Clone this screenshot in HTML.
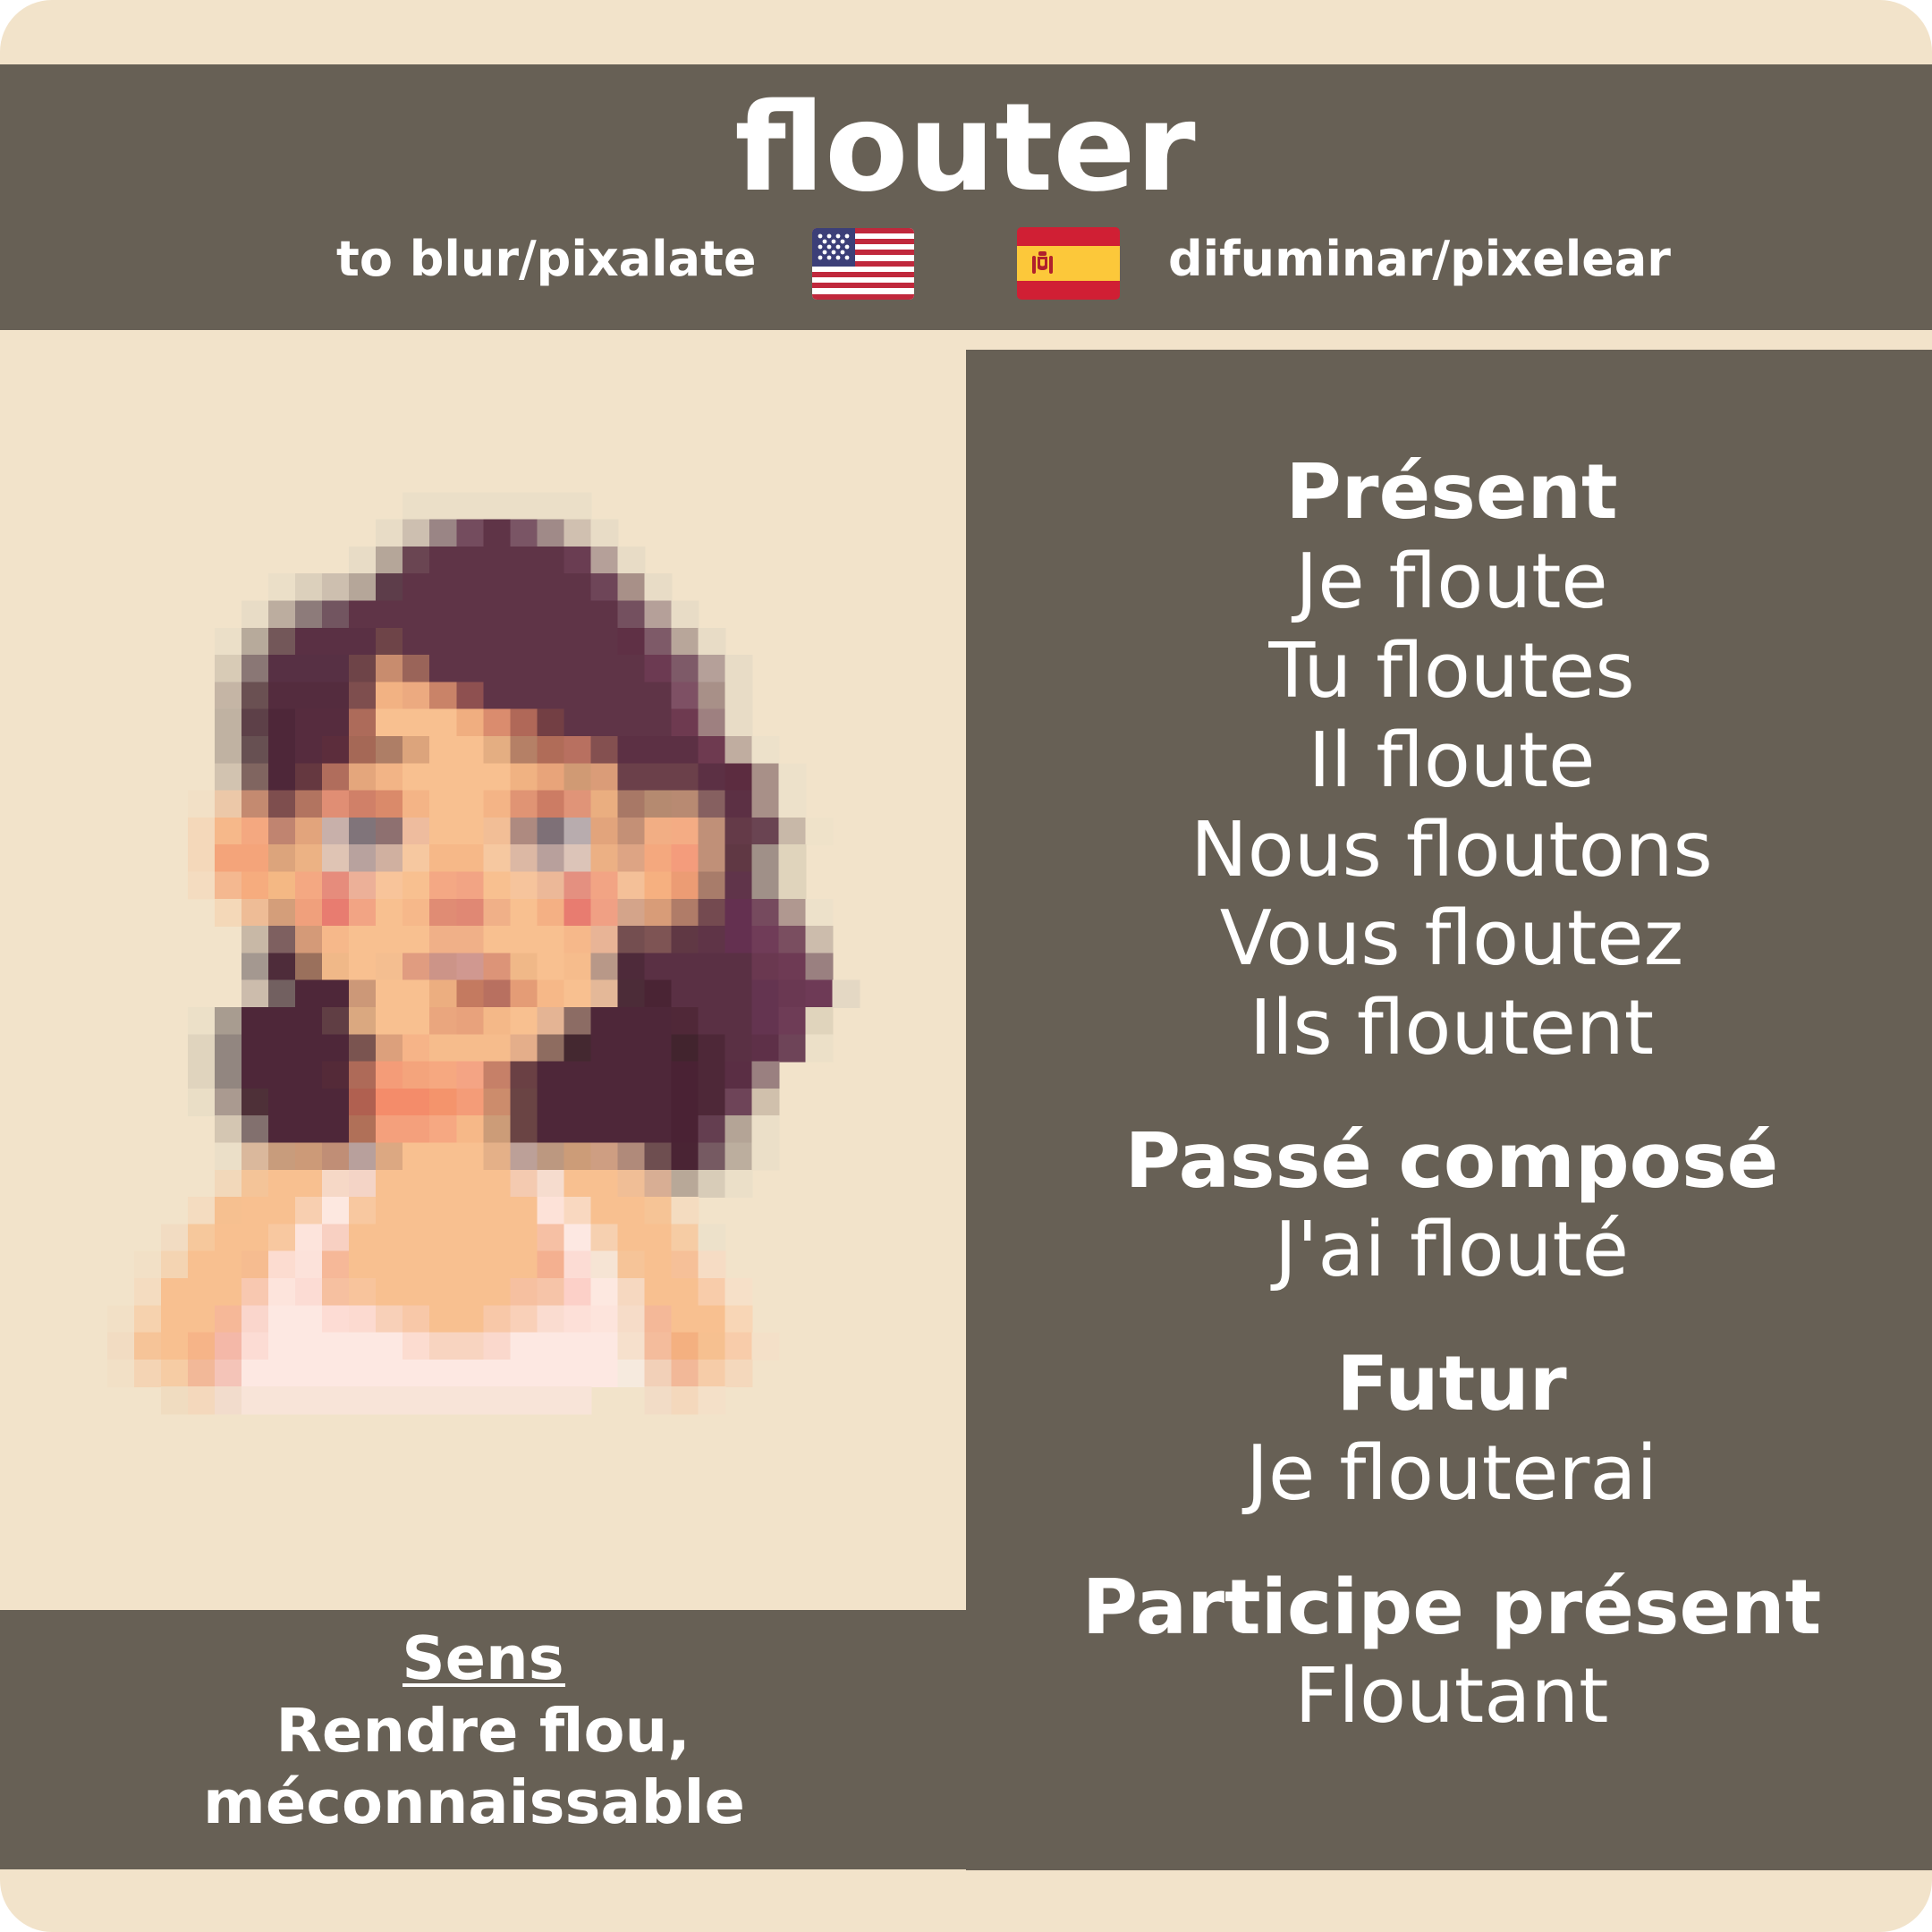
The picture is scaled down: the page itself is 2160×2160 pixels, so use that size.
<!DOCTYPE html>
<html><head><meta charset="utf-8"><style>
html,body{margin:0;padding:0;background:#fff;}
svg{display:block}
text{font-family:"DejaVu Sans","Liberation Sans",sans-serif;fill:#fff}
.b{font-weight:bold}
</style></head><body>
<svg width="2160" height="2160" viewBox="0 0 2160 2160" xmlns="http://www.w3.org/2000/svg">
<rect x="0" y="0" width="2160" height="2160" rx="58" fill="#f2e3ca"/>
<rect x="0" y="72" width="2160" height="297" fill="#676055"/>
<rect x="1080" y="391" width="1080" height="1700" fill="#676055"/>
<rect x="0" y="1800" width="2160" height="290" fill="#676055"/>

<text class="b" x="1079" y="212" font-size="136" text-anchor="middle">flouter</text>
<text class="b" x="376" y="308" font-size="54">to blur/pixalate</text>
<text class="b" x="1306" y="308" font-size="54">difuminar/pixelear</text>

<!-- US flag -->
<g transform="translate(908,255)">
<clipPath id="uc"><rect width="114" height="80" rx="5"/></clipPath>
<g clip-path="url(#uc)">
<rect width="114" height="80" fill="#fff"/>
<g fill="#c0283c">
<rect y="0" width="114" height="6"/><rect y="12" width="114" height="6"/><rect y="24" width="114" height="6"/><rect y="37" width="114" height="6"/><rect y="49" width="114" height="6"/><rect y="61" width="114" height="6"/><rect y="74" width="114" height="6"/>
</g>
<rect width="48" height="43" fill="#3c3f78"/>
<g fill="#fff">
<circle cx="9" cy="9" r="2.4"/><circle cx="19" cy="9" r="2.4"/><circle cx="29" cy="9" r="2.4"/><circle cx="39" cy="9" r="2.4"/>
<circle cx="14" cy="15" r="2.4"/><circle cx="24" cy="15" r="2.4"/><circle cx="34" cy="15" r="2.4"/>
<circle cx="9" cy="21" r="2.4"/><circle cx="19" cy="21" r="2.4"/><circle cx="29" cy="21" r="2.4"/><circle cx="39" cy="21" r="2.4"/>
<circle cx="14" cy="27" r="2.4"/><circle cx="24" cy="27" r="2.4"/><circle cx="34" cy="27" r="2.4"/>
<circle cx="9" cy="33" r="2.4"/><circle cx="19" cy="33" r="2.4"/><circle cx="29" cy="33" r="2.4"/><circle cx="39" cy="33" r="2.4"/>
</g></g></g>
<!-- Spain flag -->
<g transform="translate(1137,254)">
<clipPath id="sc"><rect width="115" height="81" rx="5"/></clipPath>
<g clip-path="url(#sc)">
<rect width="115" height="81" fill="#d01f34"/>
<rect y="21" width="115" height="39" fill="#fcc83a"/>
<g fill="#b0202c">
<rect x="17" y="32" width="4" height="20" rx="2"/><rect x="36" y="32" width="4" height="20" rx="2"/>
<rect x="24" y="27" width="9" height="5" rx="2"/>
<path d="M23 33h11v12c0 4-11 4-11 0z"/>
</g>
<path d="M26 36h5v6c0 2-5 2-5 0z" fill="#fcc83a"/>
</g></g>

<!-- Face -->
<g transform="translate(120,520) scale(30.02,30.3)" shape-rendering="crispEdges">
<rect x="11" y="1" width="7.03" height="1.03" fill="#ebdfc8"/>
<rect x="10" y="2" width="1.03" height="1.03" fill="#e8dcc6"/><rect x="11" y="2" width="1.03" height="1.03" fill="#cdbfb0"/><rect x="12" y="2" width="1.03" height="1.03" fill="#9a8585"/><rect x="13" y="2" width="1.03" height="1.03" fill="#744c5e"/><rect x="14" y="2" width="1.03" height="1.03" fill="#5f3447"/><rect x="15" y="2" width="1.03" height="1.03" fill="#7a5565"/><rect x="16" y="2" width="1.03" height="1.03" fill="#a08a88"/><rect x="17" y="2" width="1.03" height="1.03" fill="#d0c0b0"/><rect x="18" y="2" width="1.03" height="1.03" fill="#e8dcc6"/>
<rect x="9" y="3" width="1.03" height="1.03" fill="#e8dcc6"/><rect x="10" y="3" width="1.03" height="1.03" fill="#b5a699"/><rect x="11" y="3" width="1.03" height="1.03" fill="#6a4552"/><rect x="12" y="3" width="5.03" height="1.03" fill="#5f3447"/><rect x="17" y="3" width="1.03" height="1.03" fill="#6a3d52"/><rect x="18" y="3" width="1.03" height="1.03" fill="#b5a099"/><rect x="19" y="3" width="1.03" height="1.03" fill="#e8dcc6"/>
<rect x="6" y="4" width="1.03" height="1.03" fill="#ebdfc8"/><rect x="7" y="4" width="1.03" height="1.03" fill="#dcd0bc"/><rect x="8" y="4" width="1.03" height="1.03" fill="#cdbfaf"/><rect x="9" y="4" width="1.03" height="1.03" fill="#b5a699"/><rect x="10" y="4" width="1.03" height="1.03" fill="#5d3d4a"/><rect x="11" y="4" width="7.03" height="1.03" fill="#5f3447"/><rect x="18" y="4" width="1.03" height="1.03" fill="#6e4558"/><rect x="19" y="4" width="1.03" height="1.03" fill="#a89088"/><rect x="20" y="4" width="1.03" height="1.03" fill="#e8dcc6"/>
<rect x="5" y="5" width="1.03" height="1.03" fill="#e8dcc6"/><rect x="6" y="5" width="1.03" height="1.03" fill="#bcad9f"/><rect x="7" y="5" width="1.03" height="1.03" fill="#8d7b7a"/><rect x="8" y="5" width="1.03" height="1.03" fill="#725560"/><rect x="9" y="5" width="10.03" height="1.03" fill="#5f3447"/><rect x="19" y="5" width="1.03" height="1.03" fill="#74505f"/><rect x="20" y="5" width="1.03" height="1.03" fill="#b5a099"/><rect x="21" y="5" width="1.03" height="1.03" fill="#e8dcc6"/>
<rect x="4" y="6" width="1.03" height="1.03" fill="#ebdfc8"/><rect x="5" y="6" width="1.03" height="1.03" fill="#b7aa9b"/><rect x="6" y="6" width="1.03" height="1.03" fill="#735759"/><rect x="7" y="6" width="3.03" height="1.03" fill="#5a3044"/><rect x="10" y="6" width="1.03" height="1.03" fill="#6e4448"/><rect x="11" y="6" width="8.03" height="1.03" fill="#5f3447"/><rect x="19" y="6" width="1.03" height="1.03" fill="#5f3045"/><rect x="20" y="6" width="1.03" height="1.03" fill="#7e5a68"/><rect x="21" y="6" width="1.03" height="1.03" fill="#b8a69a"/><rect x="22" y="6" width="1.03" height="1.03" fill="#e8dcc6"/>
<rect x="4" y="7" width="1.03" height="1.03" fill="#d8cbb6"/><rect x="5" y="7" width="1.03" height="1.03" fill="#8a7775"/><rect x="6" y="7" width="3.03" height="1.03" fill="#573044"/><rect x="9" y="7" width="1.03" height="1.03" fill="#6e4448"/><rect x="10" y="7" width="1.03" height="1.03" fill="#c88c6e"/><rect x="11" y="7" width="1.03" height="1.03" fill="#9a6459"/><rect x="12" y="7" width="8.03" height="1.03" fill="#5f3447"/><rect x="20" y="7" width="1.03" height="1.03" fill="#6c3a52"/><rect x="21" y="7" width="1.03" height="1.03" fill="#7e5a68"/><rect x="22" y="7" width="1.03" height="1.03" fill="#b5a099"/><rect x="23" y="7" width="1.03" height="1.03" fill="#e8dcc6"/>
<rect x="4" y="8" width="1.03" height="1.03" fill="#c5b5a5"/><rect x="5" y="8" width="1.03" height="1.03" fill="#6a5052"/><rect x="6" y="8" width="3.03" height="1.03" fill="#542c3e"/><rect x="9" y="8" width="1.03" height="1.03" fill="#7e4e4e"/><rect x="10" y="8" width="1.03" height="1.03" fill="#f2b283"/><rect x="11" y="8" width="1.03" height="1.03" fill="#ecaa80"/><rect x="12" y="8" width="1.03" height="1.03" fill="#c98368"/><rect x="13" y="8" width="1.03" height="1.03" fill="#8e5050"/><rect x="14" y="8" width="7.03" height="1.03" fill="#5f3447"/><rect x="21" y="8" width="1.03" height="1.03" fill="#7e5064"/><rect x="22" y="8" width="1.03" height="1.03" fill="#a89088"/><rect x="23" y="8" width="1.03" height="1.03" fill="#e8dcc6"/>
<rect x="4" y="9" width="1.03" height="1.03" fill="#c0b2a2"/><rect x="5" y="9" width="1.03" height="1.03" fill="#5d4048"/><rect x="6" y="9" width="1.03" height="1.03" fill="#4e2739"/><rect x="7" y="9" width="2.03" height="1.03" fill="#562c3e"/><rect x="9" y="9" width="1.03" height="1.03" fill="#ad6b5a"/><rect x="10" y="9" width="3.03" height="1.03" fill="#f8c090"/><rect x="13" y="9" width="1.03" height="1.03" fill="#f0ae80"/><rect x="14" y="9" width="1.03" height="1.03" fill="#da8c6e"/><rect x="15" y="9" width="1.03" height="1.03" fill="#b06858"/><rect x="16" y="9" width="1.03" height="1.03" fill="#733f44"/><rect x="17" y="9" width="4.03" height="1.03" fill="#5f3447"/><rect x="21" y="9" width="1.03" height="1.03" fill="#6e3a50"/><rect x="22" y="9" width="1.03" height="1.03" fill="#9e8080"/><rect x="23" y="9" width="1.03" height="1.03" fill="#e8dcc6"/>
<rect x="4" y="10" width="1.03" height="1.03" fill="#c0b2a2"/><rect x="5" y="10" width="1.03" height="1.03" fill="#675052"/><rect x="6" y="10" width="1.03" height="1.03" fill="#4e2739"/><rect x="7" y="10" width="1.03" height="1.03" fill="#562c3e"/><rect x="8" y="10" width="1.03" height="1.03" fill="#5c2d3c"/><rect x="9" y="10" width="1.03" height="1.03" fill="#a56856"/><rect x="10" y="10" width="1.03" height="1.03" fill="#ae7e66"/><rect x="11" y="10" width="1.03" height="1.03" fill="#dca47c"/><rect x="12" y="10" width="2.03" height="1.03" fill="#f8c090"/><rect x="14" y="10" width="1.03" height="1.03" fill="#e4ae82"/><rect x="15" y="10" width="1.03" height="1.03" fill="#b58066"/><rect x="16" y="10" width="1.03" height="1.03" fill="#b06c58"/><rect x="17" y="10" width="1.03" height="1.03" fill="#b87060"/><rect x="18" y="10" width="1.03" height="1.03" fill="#845050"/><rect x="19" y="10" width="3.03" height="1.03" fill="#5c3044"/><rect x="22" y="10" width="1.03" height="1.03" fill="#6e3a50"/><rect x="23" y="10" width="1.03" height="1.03" fill="#c0ada0"/><rect x="24" y="10" width="1.03" height="1.03" fill="#ede1ca"/>
<rect x="4" y="11" width="1.03" height="1.03" fill="#d2c3b0"/><rect x="5" y="11" width="1.03" height="1.03" fill="#806560"/><rect x="6" y="11" width="1.03" height="1.03" fill="#4e2739"/><rect x="7" y="11" width="1.03" height="1.03" fill="#653840"/><rect x="8" y="11" width="1.03" height="1.03" fill="#b06d5c"/><rect x="9" y="11" width="1.03" height="1.03" fill="#e4a67c"/><rect x="10" y="11" width="1.03" height="1.03" fill="#f2b486"/><rect x="11" y="11" width="4.03" height="1.03" fill="#f8c090"/><rect x="15" y="11" width="1.03" height="1.03" fill="#f0b282"/><rect x="16" y="11" width="1.03" height="1.03" fill="#e8a47a"/><rect x="17" y="11" width="1.03" height="1.03" fill="#d09a74"/><rect x="18" y="11" width="1.03" height="1.03" fill="#da9c78"/><rect x="19" y="11" width="3.03" height="1.03" fill="#6b404a"/><rect x="22" y="11" width="1.03" height="1.03" fill="#5c3044"/><rect x="23" y="11" width="1.03" height="1.03" fill="#5c2c40"/><rect x="24" y="11" width="1.03" height="1.03" fill="#a89088"/><rect x="25" y="11" width="1.03" height="1.03" fill="#ede1ca"/>
<rect x="3" y="12" width="1.03" height="1.03" fill="#f2e0c6"/><rect x="4" y="12" width="1.03" height="1.03" fill="#ecc8a8"/><rect x="5" y="12" width="1.03" height="1.03" fill="#c48a70"/><rect x="6" y="12" width="1.03" height="1.03" fill="#7e4e4e"/><rect x="7" y="12" width="1.03" height="1.03" fill="#b27460"/><rect x="8" y="12" width="1.03" height="1.03" fill="#e08e74"/><rect x="9" y="12" width="1.03" height="1.03" fill="#d08068"/><rect x="10" y="12" width="1.03" height="1.03" fill="#da8a6a"/><rect x="11" y="12" width="1.03" height="1.03" fill="#f4b486"/><rect x="12" y="12" width="2.03" height="1.03" fill="#f8c090"/><rect x="14" y="12" width="1.03" height="1.03" fill="#f4b486"/><rect x="15" y="12" width="1.03" height="1.03" fill="#e09474"/><rect x="16" y="12" width="1.03" height="1.03" fill="#cc7c64"/><rect x="17" y="12" width="1.03" height="1.03" fill="#e09478"/><rect x="18" y="12" width="1.03" height="1.03" fill="#eaae80"/><rect x="19" y="12" width="1.03" height="1.03" fill="#a87866"/><rect x="20" y="12" width="1.03" height="1.03" fill="#b58a70"/><rect x="21" y="12" width="1.03" height="1.03" fill="#b88a72"/><rect x="22" y="12" width="1.03" height="1.03" fill="#866060"/><rect x="23" y="12" width="1.03" height="1.03" fill="#5c3044"/><rect x="24" y="12" width="1.03" height="1.03" fill="#a89088"/><rect x="25" y="12" width="1.03" height="1.03" fill="#ede1ca"/>
<rect x="3" y="13" width="1.03" height="1.03" fill="#f4d8ba"/><rect x="4" y="13" width="1.03" height="1.03" fill="#f6b88a"/><rect x="5" y="13" width="1.03" height="1.03" fill="#f4a880"/><rect x="6" y="13" width="1.03" height="1.03" fill="#c08470"/><rect x="7" y="13" width="1.03" height="1.03" fill="#e2a47c"/><rect x="8" y="13" width="1.03" height="1.03" fill="#c8b0aa"/><rect x="9" y="13" width="1.03" height="1.03" fill="#80747a"/><rect x="10" y="13" width="1.03" height="1.03" fill="#8e7070"/><rect x="11" y="13" width="1.03" height="1.03" fill="#eebc9e"/><rect x="12" y="13" width="2.03" height="1.03" fill="#f8c090"/><rect x="14" y="13" width="1.03" height="1.03" fill="#f2be96"/><rect x="15" y="13" width="1.03" height="1.03" fill="#ae8a80"/><rect x="16" y="13" width="1.03" height="1.03" fill="#7e7077"/><rect x="17" y="13" width="1.03" height="1.03" fill="#b8acae"/><rect x="18" y="13" width="1.03" height="1.03" fill="#e2a47c"/><rect x="19" y="13" width="1.03" height="1.03" fill="#c49076"/><rect x="20" y="13" width="1.03" height="1.03" fill="#f2ae84"/><rect x="21" y="13" width="1.03" height="1.03" fill="#f4ac84"/><rect x="22" y="13" width="1.03" height="1.03" fill="#c09078"/><rect x="23" y="13" width="1.03" height="1.03" fill="#643a48"/><rect x="24" y="13" width="1.03" height="1.03" fill="#6a4452"/><rect x="25" y="13" width="1.03" height="1.03" fill="#c8b8a8"/><rect x="26" y="13" width="1.03" height="1.03" fill="#efe2c9"/>
<rect x="3" y="14" width="1.03" height="1.03" fill="#f4d8ba"/><rect x="4" y="14" width="2.03" height="1.03" fill="#f4a47a"/><rect x="6" y="14" width="1.03" height="1.03" fill="#dca47c"/><rect x="7" y="14" width="1.03" height="1.03" fill="#ecb284"/><rect x="8" y="14" width="1.03" height="1.03" fill="#dfc4b4"/><rect x="9" y="14" width="1.03" height="1.03" fill="#b8a29e"/><rect x="10" y="14" width="1.03" height="1.03" fill="#d0b0a0"/><rect x="11" y="14" width="1.03" height="1.03" fill="#f6c8a0"/><rect x="12" y="14" width="2.03" height="1.03" fill="#f6b888"/><rect x="14" y="14" width="1.03" height="1.03" fill="#f6c8a0"/><rect x="15" y="14" width="1.03" height="1.03" fill="#dcb8a4"/><rect x="16" y="14" width="1.03" height="1.03" fill="#b8a09c"/><rect x="17" y="14" width="1.03" height="1.03" fill="#dcc4b8"/><rect x="18" y="14" width="1.03" height="1.03" fill="#ecb084"/><rect x="19" y="14" width="1.03" height="1.03" fill="#dda484"/><rect x="20" y="14" width="1.03" height="1.03" fill="#f4a87e"/><rect x="21" y="14" width="1.03" height="1.03" fill="#f49c7c"/><rect x="22" y="14" width="1.03" height="1.03" fill="#c09078"/><rect x="23" y="14" width="1.03" height="1.03" fill="#603844"/><rect x="24" y="14" width="1.03" height="1.03" fill="#a09088"/><rect x="25" y="14" width="1.03" height="1.03" fill="#e0d4bc"/>
<rect x="3" y="15" width="1.03" height="1.03" fill="#f4dcc0"/><rect x="4" y="15" width="1.03" height="1.03" fill="#f4b890"/><rect x="5" y="15" width="1.03" height="1.03" fill="#f6ac7e"/><rect x="6" y="15" width="1.03" height="1.03" fill="#f4b884"/><rect x="7" y="15" width="1.03" height="1.03" fill="#f4a882"/><rect x="8" y="15" width="1.03" height="1.03" fill="#e68c7c"/><rect x="9" y="15" width="1.03" height="1.03" fill="#ecb098"/><rect x="10" y="15" width="1.03" height="1.03" fill="#f8c49a"/><rect x="11" y="15" width="1.03" height="1.03" fill="#f8c090"/><rect x="12" y="15" width="1.03" height="1.03" fill="#f4a884"/><rect x="13" y="15" width="1.03" height="1.03" fill="#f2a484"/><rect x="14" y="15" width="1.03" height="1.03" fill="#f8c090"/><rect x="15" y="15" width="1.03" height="1.03" fill="#f6c49c"/><rect x="16" y="15" width="1.03" height="1.03" fill="#ecb898"/><rect x="17" y="15" width="1.03" height="1.03" fill="#e49080"/><rect x="18" y="15" width="1.03" height="1.03" fill="#f2a484"/><rect x="19" y="15" width="1.03" height="1.03" fill="#f4c098"/><rect x="20" y="15" width="1.03" height="1.03" fill="#f6b080"/><rect x="21" y="15" width="1.03" height="1.03" fill="#ec9c74"/><rect x="22" y="15" width="1.03" height="1.03" fill="#a87c6a"/><rect x="23" y="15" width="1.03" height="1.03" fill="#60344a"/><rect x="24" y="15" width="1.03" height="1.03" fill="#a09088"/><rect x="25" y="15" width="1.03" height="1.03" fill="#e0d4bc"/>
<rect x="4" y="16" width="1.03" height="1.03" fill="#f4d8b8"/><rect x="5" y="16" width="1.03" height="1.03" fill="#eebc96"/><rect x="6" y="16" width="1.03" height="1.03" fill="#d49e7a"/><rect x="7" y="16" width="1.03" height="1.03" fill="#f0a07c"/><rect x="8" y="16" width="1.03" height="1.03" fill="#e87c70"/><rect x="9" y="16" width="1.03" height="1.03" fill="#f2a484"/><rect x="10" y="16" width="1.03" height="1.03" fill="#f8c090"/><rect x="11" y="16" width="1.03" height="1.03" fill="#f6b88a"/><rect x="12" y="16" width="1.03" height="1.03" fill="#e08c74"/><rect x="13" y="16" width="1.03" height="1.03" fill="#e08874"/><rect x="14" y="16" width="1.03" height="1.03" fill="#f0b088"/><rect x="15" y="16" width="1.03" height="1.03" fill="#f8c090"/><rect x="16" y="16" width="1.03" height="1.03" fill="#f4b084"/><rect x="17" y="16" width="1.03" height="1.03" fill="#e87c70"/><rect x="18" y="16" width="1.03" height="1.03" fill="#f0a084"/><rect x="19" y="16" width="1.03" height="1.03" fill="#d4a48a"/><rect x="20" y="16" width="1.03" height="1.03" fill="#d89c78"/><rect x="21" y="16" width="1.03" height="1.03" fill="#b07c68"/><rect x="22" y="16" width="1.03" height="1.03" fill="#744a50"/><rect x="23" y="16" width="1.03" height="1.03" fill="#643050"/><rect x="24" y="16" width="1.03" height="1.03" fill="#764a5e"/><rect x="25" y="16" width="1.03" height="1.03" fill="#b09890"/><rect x="26" y="16" width="1.03" height="1.03" fill="#ede1ca"/>
<rect x="5" y="17" width="1.03" height="1.03" fill="#c8b8a6"/><rect x="6" y="17" width="1.03" height="1.03" fill="#7e6060"/><rect x="7" y="17" width="1.03" height="1.03" fill="#d49a78"/><rect x="8" y="17" width="1.03" height="1.03" fill="#f6b88a"/><rect x="9" y="17" width="3.03" height="1.03" fill="#f8c090"/><rect x="12" y="17" width="2.03" height="1.03" fill="#f0b088"/><rect x="14" y="17" width="3.03" height="1.03" fill="#f8c090"/><rect x="17" y="17" width="1.03" height="1.03" fill="#f6b88a"/><rect x="18" y="17" width="1.03" height="1.03" fill="#e8b496"/><rect x="19" y="17" width="1.03" height="1.03" fill="#744e50"/><rect x="20" y="17" width="1.03" height="1.03" fill="#7e5454"/><rect x="21" y="17" width="1.03" height="1.03" fill="#603844"/><rect x="22" y="17" width="1.03" height="1.03" fill="#5f3447"/><rect x="23" y="17" width="1.03" height="1.03" fill="#643050"/><rect x="24" y="17" width="1.03" height="1.03" fill="#703c58"/><rect x="25" y="17" width="1.03" height="1.03" fill="#7a4e60"/><rect x="26" y="17" width="1.03" height="1.03" fill="#ccbcac"/>
<rect x="5" y="18" width="1.03" height="1.03" fill="#a49890"/><rect x="6" y="18" width="1.03" height="1.03" fill="#4e2c3a"/><rect x="7" y="18" width="1.03" height="1.03" fill="#9a705c"/><rect x="8" y="18" width="1.03" height="1.03" fill="#f0b888"/><rect x="9" y="18" width="1.03" height="1.03" fill="#f8c090"/><rect x="10" y="18" width="1.03" height="1.03" fill="#f4be90"/><rect x="11" y="18" width="1.03" height="1.03" fill="#e09c80"/><rect x="12" y="18" width="1.03" height="1.03" fill="#cc9488"/><rect x="13" y="18" width="1.03" height="1.03" fill="#d09890"/><rect x="14" y="18" width="1.03" height="1.03" fill="#dc9478"/><rect x="15" y="18" width="1.03" height="1.03" fill="#f0b888"/><rect x="16" y="18" width="1.03" height="1.03" fill="#f8c090"/><rect x="17" y="18" width="1.03" height="1.03" fill="#f6bc8c"/><rect x="18" y="18" width="1.03" height="1.03" fill="#b89888"/><rect x="19" y="18" width="1.03" height="1.03" fill="#4e2a3a"/><rect x="20" y="18" width="4.03" height="1.03" fill="#5a3044"/><rect x="24" y="18" width="1.03" height="1.03" fill="#6a3850"/><rect x="25" y="18" width="1.03" height="1.03" fill="#6e3a54"/><rect x="26" y="18" width="1.03" height="1.03" fill="#9a8080"/>
<rect x="5" y="19" width="1.03" height="1.03" fill="#ccbcac"/><rect x="6" y="19" width="1.03" height="1.03" fill="#726060"/><rect x="7" y="19" width="2.03" height="1.03" fill="#4e2739"/><rect x="9" y="19" width="1.03" height="1.03" fill="#cc9878"/><rect x="10" y="19" width="2.03" height="1.03" fill="#f8c090"/><rect x="12" y="19" width="1.03" height="1.03" fill="#ecae80"/><rect x="13" y="19" width="1.03" height="1.03" fill="#c47a60"/><rect x="14" y="19" width="1.03" height="1.03" fill="#b87060"/><rect x="15" y="19" width="1.03" height="1.03" fill="#e49c76"/><rect x="16" y="19" width="1.03" height="1.03" fill="#f6b888"/><rect x="17" y="19" width="1.03" height="1.03" fill="#f8c090"/><rect x="18" y="19" width="1.03" height="1.03" fill="#e4b898"/><rect x="19" y="19" width="1.03" height="1.03" fill="#4c2c38"/><rect x="20" y="19" width="1.03" height="1.03" fill="#4a2434"/><rect x="21" y="19" width="3.03" height="1.03" fill="#5a3044"/><rect x="24" y="19" width="1.03" height="1.03" fill="#643450"/><rect x="25" y="19" width="1.03" height="1.03" fill="#6a3852"/><rect x="26" y="19" width="1.03" height="1.03" fill="#6e3a56"/><rect x="27" y="19" width="1.03" height="1.03" fill="#e4d8c4"/>
<rect x="3" y="20" width="1.03" height="1.03" fill="#ece0c8"/><rect x="4" y="20" width="1.03" height="1.03" fill="#a89c90"/><rect x="5" y="20" width="3.03" height="1.03" fill="#4e2739"/><rect x="8" y="20" width="1.03" height="1.03" fill="#603e44"/><rect x="9" y="20" width="1.03" height="1.03" fill="#daa880"/><rect x="10" y="20" width="2.03" height="1.03" fill="#f8c090"/><rect x="12" y="20" width="1.03" height="1.03" fill="#eaa67e"/><rect x="13" y="20" width="1.03" height="1.03" fill="#e8a27c"/><rect x="14" y="20" width="1.03" height="1.03" fill="#f4b888"/><rect x="15" y="20" width="1.03" height="1.03" fill="#f8c090"/><rect x="16" y="20" width="1.03" height="1.03" fill="#e4b494"/><rect x="17" y="20" width="1.03" height="1.03" fill="#8c6c64"/><rect x="18" y="20" width="3.03" height="1.03" fill="#4e2739"/><rect x="21" y="20" width="1.03" height="1.03" fill="#502838"/><rect x="22" y="20" width="2.03" height="1.03" fill="#5a3044"/><rect x="24" y="20" width="1.03" height="1.03" fill="#643450"/><rect x="25" y="20" width="1.03" height="1.03" fill="#6e3c56"/><rect x="26" y="20" width="1.03" height="1.03" fill="#e0d4bc"/>
<rect x="3" y="21" width="1.03" height="1.03" fill="#e0d4be"/><rect x="4" y="21" width="1.03" height="1.03" fill="#928680"/><rect x="5" y="21" width="4.03" height="1.03" fill="#4e2739"/><rect x="9" y="21" width="1.03" height="1.03" fill="#7a5450"/><rect x="10" y="21" width="1.03" height="1.03" fill="#dca07c"/><rect x="11" y="21" width="1.03" height="1.03" fill="#f6b488"/><rect x="12" y="21" width="3.03" height="1.03" fill="#f6bc8c"/><rect x="15" y="21" width="1.03" height="1.03" fill="#e4ae8a"/><rect x="16" y="21" width="1.03" height="1.03" fill="#8e6c60"/><rect x="17" y="21" width="1.03" height="1.03" fill="#442830"/><rect x="18" y="21" width="3.03" height="1.03" fill="#4e2739"/><rect x="21" y="21" width="1.03" height="1.03" fill="#42242e"/><rect x="22" y="21" width="1.03" height="1.03" fill="#4e2838"/><rect x="23" y="21" width="1.03" height="1.03" fill="#5a3044"/><rect x="24" y="21" width="1.03" height="1.03" fill="#5e3048"/><rect x="25" y="21" width="1.03" height="1.03" fill="#6e4458"/><rect x="26" y="21" width="1.03" height="1.03" fill="#ece0c8"/>
<rect x="3" y="22" width="1.03" height="1.03" fill="#e0d4be"/><rect x="4" y="22" width="1.03" height="1.03" fill="#928680"/><rect x="5" y="22" width="3.03" height="1.03" fill="#4e2739"/><rect x="8" y="22" width="1.03" height="1.03" fill="#542a38"/><rect x="9" y="22" width="1.03" height="1.03" fill="#ae6a58"/><rect x="10" y="22" width="1.03" height="1.03" fill="#f49c78"/><rect x="11" y="22" width="1.03" height="1.03" fill="#f4a47c"/><rect x="12" y="22" width="1.03" height="1.03" fill="#f6a880"/><rect x="13" y="22" width="1.03" height="1.03" fill="#f4a484"/><rect x="14" y="22" width="1.03" height="1.03" fill="#c68068"/><rect x="15" y="22" width="1.03" height="1.03" fill="#6a4044"/><rect x="16" y="22" width="5.03" height="1.03" fill="#4e2739"/><rect x="21" y="22" width="1.03" height="1.03" fill="#4a2234"/><rect x="22" y="22" width="1.03" height="1.03" fill="#4e2838"/><rect x="23" y="22" width="1.03" height="1.03" fill="#5a2e44"/><rect x="24" y="22" width="1.03" height="1.03" fill="#9a8080"/>
<rect x="3" y="23" width="1.03" height="1.03" fill="#eadec6"/><rect x="4" y="23" width="1.03" height="1.03" fill="#aa9a90"/><rect x="5" y="23" width="1.03" height="1.03" fill="#4e3038"/><rect x="6" y="23" width="3.03" height="1.03" fill="#4e2739"/><rect x="9" y="23" width="1.03" height="1.03" fill="#b06050"/><rect x="10" y="23" width="2.03" height="1.03" fill="#f48c6a"/><rect x="12" y="23" width="1.03" height="1.03" fill="#f4946c"/><rect x="13" y="23" width="1.03" height="1.03" fill="#f49c78"/><rect x="14" y="23" width="1.03" height="1.03" fill="#cc8c6c"/><rect x="15" y="23" width="1.03" height="1.03" fill="#6a4444"/><rect x="16" y="23" width="5.03" height="1.03" fill="#4e2739"/><rect x="21" y="23" width="1.03" height="1.03" fill="#4a2234"/><rect x="22" y="23" width="1.03" height="1.03" fill="#4e2838"/><rect x="23" y="23" width="1.03" height="1.03" fill="#6e4458"/><rect x="24" y="23" width="1.03" height="1.03" fill="#d0c0ac"/>
<rect x="4" y="24" width="1.03" height="1.03" fill="#d4c6b2"/><rect x="5" y="24" width="1.03" height="1.03" fill="#82706e"/><rect x="6" y="24" width="3.03" height="1.03" fill="#4e2739"/><rect x="9" y="24" width="1.03" height="1.03" fill="#b07058"/><rect x="10" y="24" width="2.03" height="1.03" fill="#f4a07c"/><rect x="12" y="24" width="1.03" height="1.03" fill="#f6a882"/><rect x="13" y="24" width="1.03" height="1.03" fill="#f6b888"/><rect x="14" y="24" width="1.03" height="1.03" fill="#cc9c78"/><rect x="15" y="24" width="1.03" height="1.03" fill="#6a4444"/><rect x="16" y="24" width="5.03" height="1.03" fill="#4e2739"/><rect x="21" y="24" width="1.03" height="1.03" fill="#4a2234"/><rect x="22" y="24" width="1.03" height="1.03" fill="#643e50"/><rect x="23" y="24" width="1.03" height="1.03" fill="#b4a496"/><rect x="24" y="24" width="1.03" height="1.03" fill="#ebdfc8"/>
<rect x="4" y="25" width="1.03" height="1.03" fill="#ebdfc8"/><rect x="5" y="25" width="1.03" height="1.03" fill="#dab89c"/><rect x="6" y="25" width="1.03" height="1.03" fill="#c89c7c"/><rect x="7" y="25" width="1.03" height="1.03" fill="#cc9a78"/><rect x="8" y="25" width="1.03" height="1.03" fill="#c08e76"/><rect x="9" y="25" width="1.03" height="1.03" fill="#b8a09c"/><rect x="10" y="25" width="1.03" height="1.03" fill="#dca882"/><rect x="11" y="25" width="3.03" height="1.03" fill="#f8c090"/><rect x="14" y="25" width="1.03" height="1.03" fill="#e4b088"/><rect x="15" y="25" width="1.03" height="1.03" fill="#bca098"/><rect x="16" y="25" width="1.03" height="1.03" fill="#bc9880"/><rect x="17" y="25" width="1.03" height="1.03" fill="#cc9c78"/><rect x="18" y="25" width="1.03" height="1.03" fill="#ce9e82"/><rect x="19" y="25" width="1.03" height="1.03" fill="#b08a7a"/><rect x="20" y="25" width="1.03" height="1.03" fill="#6e4e50"/><rect x="21" y="25" width="1.03" height="1.03" fill="#4a2434"/><rect x="22" y="25" width="1.03" height="1.03" fill="#765a62"/><rect x="23" y="25" width="1.03" height="1.03" fill="#bcae9e"/><rect x="24" y="25" width="1.03" height="1.03" fill="#ebdfc8"/>
<rect x="4" y="26" width="1.03" height="1.03" fill="#f2d8ba"/><rect x="5" y="26" width="1.03" height="1.03" fill="#f4c498"/><rect x="6" y="26" width="2.03" height="1.03" fill="#f8c090"/><rect x="8" y="26" width="1.03" height="1.03" fill="#f6d8c6"/><rect x="9" y="26" width="1.03" height="1.03" fill="#f4d4c6"/><rect x="10" y="26" width="5.03" height="1.03" fill="#f8c090"/><rect x="15" y="26" width="1.03" height="1.03" fill="#f4cab0"/><rect x="16" y="26" width="1.03" height="1.03" fill="#f6dcce"/><rect x="17" y="26" width="2.03" height="1.03" fill="#f8c090"/><rect x="19" y="26" width="1.03" height="1.03" fill="#f0be96"/><rect x="20" y="26" width="1.03" height="1.03" fill="#d8ae94"/><rect x="21" y="26" width="1.03" height="1.03" fill="#b8a898"/><rect x="22" y="26" width="1.03" height="1.03" fill="#d8ccb8"/><rect x="23" y="26" width="1.03" height="1.03" fill="#ebdfc8"/>
<rect x="3" y="27" width="1.03" height="1.03" fill="#f4dcc0"/><rect x="4" y="27" width="1.03" height="1.03" fill="#f6c090"/><rect x="5" y="27" width="2.03" height="1.03" fill="#f8c090"/><rect x="7" y="27" width="1.03" height="1.03" fill="#f8cfb0"/><rect x="8" y="27" width="1.03" height="1.03" fill="#fde8e0"/><rect x="9" y="27" width="1.03" height="1.03" fill="#f8c8a0"/><rect x="10" y="27" width="6.03" height="1.03" fill="#f8c090"/><rect x="16" y="27" width="1.03" height="1.03" fill="#fde2d8"/><rect x="17" y="27" width="1.03" height="1.03" fill="#f9d8c0"/><rect x="18" y="27" width="2.03" height="1.03" fill="#f8c090"/><rect x="20" y="27" width="1.03" height="1.03" fill="#f6c496"/><rect x="21" y="27" width="1.03" height="1.03" fill="#f4dcc0"/>
<rect x="2" y="28" width="1.03" height="1.03" fill="#f2dcc2"/><rect x="3" y="28" width="1.03" height="1.03" fill="#f6c89c"/><rect x="4" y="28" width="2.03" height="1.03" fill="#f8c090"/><rect x="6" y="28" width="1.03" height="1.03" fill="#f8c8a0"/><rect x="7" y="28" width="1.03" height="1.03" fill="#fde4dc"/><rect x="8" y="28" width="1.03" height="1.03" fill="#f8d0c2"/><rect x="9" y="28" width="7.03" height="1.03" fill="#f8c090"/><rect x="16" y="28" width="1.03" height="1.03" fill="#f6c0a4"/><rect x="17" y="28" width="1.03" height="1.03" fill="#fde8e2"/><rect x="18" y="28" width="1.03" height="1.03" fill="#f6d0b0"/><rect x="19" y="28" width="2.03" height="1.03" fill="#f8c090"/><rect x="21" y="28" width="1.03" height="1.03" fill="#f6cca4"/><rect x="22" y="28" width="1.03" height="1.03" fill="#ede1ca"/>
<rect x="1" y="29" width="1.03" height="1.03" fill="#f2e0c6"/><rect x="2" y="29" width="1.03" height="1.03" fill="#f4d4b2"/><rect x="3" y="29" width="2.03" height="1.03" fill="#f8c090"/><rect x="5" y="29" width="1.03" height="1.03" fill="#f6bc90"/><rect x="6" y="29" width="1.03" height="1.03" fill="#fcdcd0"/><rect x="7" y="29" width="1.03" height="1.03" fill="#fce2da"/><rect x="8" y="29" width="1.03" height="1.03" fill="#f6b898"/><rect x="9" y="29" width="7.03" height="1.03" fill="#f8c090"/><rect x="16" y="29" width="1.03" height="1.03" fill="#f4b090"/><rect x="17" y="29" width="1.03" height="1.03" fill="#fcdcd4"/><rect x="18" y="29" width="1.03" height="1.03" fill="#f6e4d4"/><rect x="19" y="29" width="1.03" height="1.03" fill="#f6c498"/><rect x="20" y="29" width="1.03" height="1.03" fill="#f8c090"/><rect x="21" y="29" width="1.03" height="1.03" fill="#f6c098"/><rect x="22" y="29" width="1.03" height="1.03" fill="#f6dcc4"/>
<rect x="1" y="30" width="1.03" height="1.03" fill="#f4dcc0"/><rect x="2" y="30" width="3.03" height="1.03" fill="#f8c090"/><rect x="5" y="30" width="1.03" height="1.03" fill="#f8c8b0"/><rect x="6" y="30" width="1.03" height="1.03" fill="#fde4dc"/><rect x="7" y="30" width="1.03" height="1.03" fill="#fcdcd4"/><rect x="8" y="30" width="1.03" height="1.03" fill="#f6c0a0"/><rect x="9" y="30" width="1.03" height="1.03" fill="#f8c49c"/><rect x="10" y="30" width="5.03" height="1.03" fill="#f8c090"/><rect x="15" y="30" width="1.03" height="1.03" fill="#f6c0a0"/><rect x="16" y="30" width="1.03" height="1.03" fill="#f6c4a8"/><rect x="17" y="30" width="1.03" height="1.03" fill="#fcd0c8"/><rect x="18" y="30" width="1.03" height="1.03" fill="#fde8e0"/><rect x="19" y="30" width="1.03" height="1.03" fill="#f6d8c0"/><rect x="20" y="30" width="2.03" height="1.03" fill="#f8c090"/><rect x="22" y="30" width="1.03" height="1.03" fill="#f8ccaa"/><rect x="23" y="30" width="1.03" height="1.03" fill="#f6e0c8"/>
<rect x="0" y="31" width="1.03" height="1.03" fill="#f2e0c6"/><rect x="1" y="31" width="1.03" height="1.03" fill="#f6d2ae"/><rect x="2" y="31" width="2.03" height="1.03" fill="#f8c090"/><rect x="4" y="31" width="1.03" height="1.03" fill="#f6b898"/><rect x="5" y="31" width="1.03" height="1.03" fill="#fad6cc"/><rect x="6" y="31" width="2.03" height="1.03" fill="#fde8e2"/><rect x="8" y="31" width="1.03" height="1.03" fill="#fddcd4"/><rect x="9" y="31" width="1.03" height="1.03" fill="#fcdad0"/><rect x="10" y="31" width="1.03" height="1.03" fill="#f8d0b8"/><rect x="11" y="31" width="1.03" height="1.03" fill="#f8c8a8"/><rect x="12" y="31" width="2.03" height="1.03" fill="#f8c090"/><rect x="14" y="31" width="1.03" height="1.03" fill="#f8c8a8"/><rect x="15" y="31" width="1.03" height="1.03" fill="#f9d0b8"/><rect x="16" y="31" width="1.03" height="1.03" fill="#fadcd0"/><rect x="17" y="31" width="1.03" height="1.03" fill="#fde0d8"/><rect x="18" y="31" width="1.03" height="1.03" fill="#fde4dc"/><rect x="19" y="31" width="1.03" height="1.03" fill="#f6dcc8"/><rect x="20" y="31" width="1.03" height="1.03" fill="#f4b898"/><rect x="21" y="31" width="2.03" height="1.03" fill="#f8c090"/><rect x="23" y="31" width="1.03" height="1.03" fill="#f8d6b6"/>
<rect x="0" y="32" width="1.03" height="1.03" fill="#f2dcc2"/><rect x="1" y="32" width="1.03" height="1.03" fill="#f6c498"/><rect x="2" y="32" width="1.03" height="1.03" fill="#f8c090"/><rect x="3" y="32" width="1.03" height="1.03" fill="#f6b488"/><rect x="4" y="32" width="1.03" height="1.03" fill="#f4b8a8"/><rect x="5" y="32" width="1.03" height="1.03" fill="#fcdcd4"/><rect x="6" y="32" width="5.03" height="1.03" fill="#fde8e2"/><rect x="11" y="32" width="1.03" height="1.03" fill="#fcdcd0"/><rect x="12" y="32" width="2.03" height="1.03" fill="#f8d4c0"/><rect x="14" y="32" width="1.03" height="1.03" fill="#fad8cc"/><rect x="15" y="32" width="4.03" height="1.03" fill="#fde8e2"/><rect x="19" y="32" width="1.03" height="1.03" fill="#f6e0cc"/><rect x="20" y="32" width="1.03" height="1.03" fill="#f4bc9c"/><rect x="21" y="32" width="1.03" height="1.03" fill="#f4b080"/><rect x="22" y="32" width="1.03" height="1.03" fill="#f6c090"/><rect x="23" y="32" width="1.03" height="1.03" fill="#f8ccaa"/><rect x="24" y="32" width="1.03" height="1.03" fill="#f4e0c8"/>
<rect x="0" y="33" width="1.03" height="1.03" fill="#f2e0c6"/><rect x="1" y="33" width="1.03" height="1.03" fill="#f4d4b4"/><rect x="2" y="33" width="1.03" height="1.03" fill="#f6cca4"/><rect x="3" y="33" width="1.03" height="1.03" fill="#f2b898"/><rect x="4" y="33" width="1.03" height="1.03" fill="#f4c4b8"/><rect x="5" y="33" width="14.03" height="1.03" fill="#fde8e2"/><rect x="19" y="33" width="1.03" height="1.03" fill="#f6eade"/><rect x="20" y="33" width="1.03" height="1.03" fill="#f2d0b8"/><rect x="21" y="33" width="1.03" height="1.03" fill="#f2b898"/><rect x="22" y="33" width="1.03" height="1.03" fill="#f6cca8"/><rect x="23" y="33" width="1.03" height="1.03" fill="#f4d8bc"/>
<rect x="2" y="34" width="1.03" height="1.03" fill="#f0dcc0"/><rect x="3" y="34" width="1.03" height="1.03" fill="#f4d8bc"/><rect x="4" y="34" width="1.03" height="1.03" fill="#f2dccc"/><rect x="5" y="34" width="13.03" height="1.03" fill="#f8e4d8"/><rect x="20" y="34" width="1.03" height="1.03" fill="#f2dcc6"/><rect x="21" y="34" width="1.03" height="1.03" fill="#f4d8bc"/><rect x="22" y="34" width="1.03" height="1.03" fill="#f4e0c8"/>
</g>

<g text-anchor="middle" font-size="85">
<text class="b" x="1623" y="579">Présent</text>
<text x="1623" y="679">Je floute</text>
<text x="1623" y="779">Tu floutes</text>
<text x="1623" y="879">Il floute</text>
<text x="1623" y="979">Nous floutons</text>
<text x="1623" y="1078">Vous floutez</text>
<text x="1623" y="1178">Ils floutent</text>
<text class="b" x="1623" y="1327">Passé composé</text>
<text x="1623" y="1426">J'ai flouté</text>
<text class="b" x="1623" y="1576">Futur</text>
<text x="1623" y="1676">Je flouterai</text>
<text class="b" x="1623" y="1826">Participe présent</text>
<text x="1623" y="1925">Floutant</text>
</g>

<g text-anchor="middle" font-size="67">
<text class="b" x="540" y="1877">Sens</text>
<rect x="450" y="1882" width="182" height="4" fill="#fff"/>
<text class="b" x="540" y="1958">Rendre flou,</text>
<text class="b" x="530" y="2038">méconnaissable</text>
</g>
</svg>
</body></html>
